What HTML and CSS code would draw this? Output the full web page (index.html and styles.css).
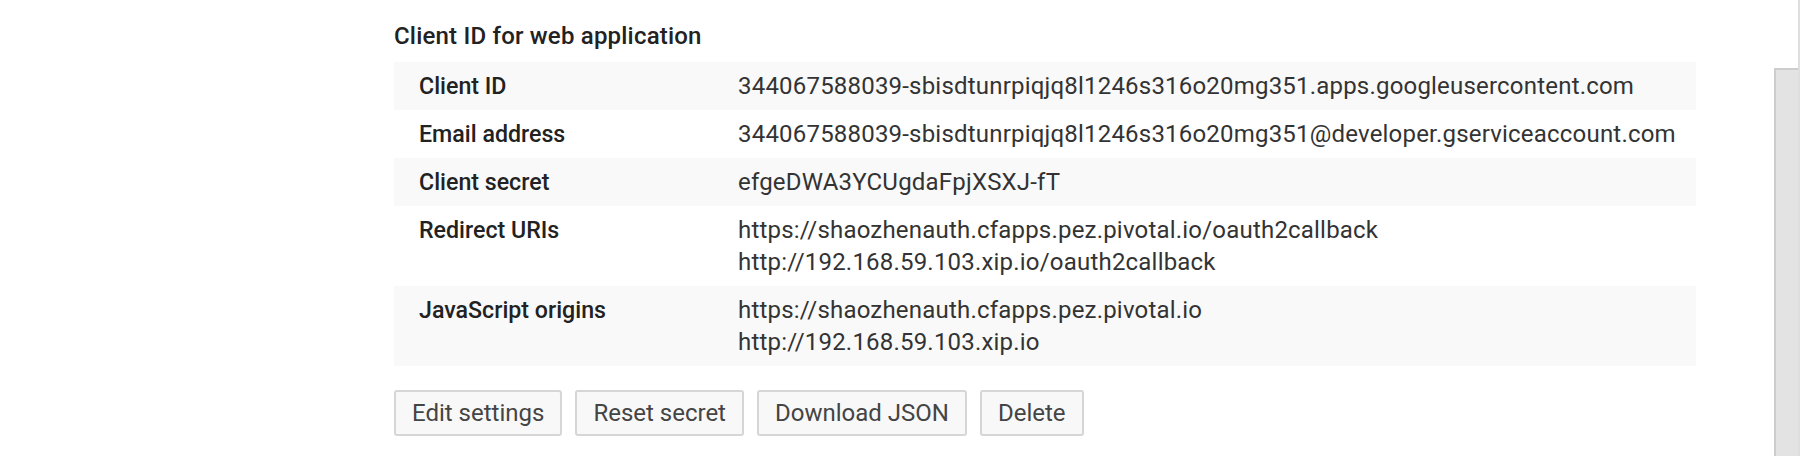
FILE: index.html
```html
<!DOCTYPE html>
<html>
<head>
<meta charset="utf-8">
<link rel="stylesheet" href="styles.css">
</head>
<body>
<div class="page">
  <main class="content">
    <h2 class="title">Client ID for web application</h2>
    <div class="table">
      <div class="row shaded">
        <div class="label">Client ID</div>
        <div class="value">344067588039-sbisdtunrpiqjq8l1246s316o20mg351.apps.googleusercontent.com</div>
      </div>
      <div class="row">
        <div class="label">Email address</div>
        <div class="value">344067588039-sbisdtunrpiqjq8l1246s316o20mg351@developer.gserviceaccount.com</div>
      </div>
      <div class="row shaded">
        <div class="label">Client secret</div>
        <div class="value">efgeDWA3YCUgdaFpjXSXJ-fT</div>
      </div>
      <div class="row">
        <div class="label">Redirect URIs</div>
        <div class="value">
          <div>https://shaozhenauth.cfapps.pez.pivotal.io/oauth2callback</div>
          <div>http://192.168.59.103.xip.io/oauth2callback</div>
        </div>
      </div>
      <div class="row shaded">
        <div class="label">JavaScript origins</div>
        <div class="value">
          <div>https://shaozhenauth.cfapps.pez.pivotal.io</div>
          <div>http://192.168.59.103.xip.io</div>
        </div>
      </div>
    </div>
    <div class="actions">
      <button class="btn">Edit settings</button>
      <button class="btn">Reset secret</button>
      <button class="btn">Download JSON</button>
      <button class="btn">Delete</button>
    </div>
  </main>
  <aside class="rail">
    <div class="thumb"></div>
  </aside>
</div>
</body>
</html>
```

FILE: styles.css
```css
html, body {
  margin: 0;
  padding: 0;
  background: #ffffff;
}

body {
  font-family: Roboto, "Noto Sans", Arial, sans-serif;
  color: #333333;
  width: 1800px;
  height: 456px;
  overflow: hidden;
}

.page {
  display: flex;
  height: 456px;
}

.content {
  flex: 0 0 1302px;
  margin-left: 394px;
  padding-top: 18px;
}

.title {
  margin: 0 0 8px 0;
  font-size: 24px;
  line-height: 36px;
  font-weight: 500;
  letter-spacing: 0.2px;
  color: #222222;
}

.table {
  display: flex;
  flex-direction: column;
}

.row {
  display: flex;
  padding: 8px 0;
  font-size: 24px;
  line-height: 32px;
}

.row.shaded {
  background: #f9f9f9;
}

.label {
  flex: 0 0 319px;
  padding-left: 25px;
  font-size: 23.2px;
  font-weight: 500;
  color: #222222;
}

.value {
  flex: 1;
  color: #333333;
  letter-spacing: 0.2px;
  white-space: nowrap;
}

.actions {
  display: flex;
  gap: 13px;
  margin-top: 24px;
}

.btn {
  box-sizing: border-box;
  height: 46px;
  padding: 0 16px;
  font-family: inherit;
  font-size: 24px;
  color: #444444;
  background: #f8f8f8;
  border: 2px solid #d6d6d6;
  border-radius: 3px;
}

.rail {
  margin-left: auto;
  width: 26px;
  display: flex;
  flex-direction: column;
  border-right: 2px solid #dedede;
  box-sizing: border-box;
}

.thumb {
  margin-top: 68px;
  flex: 1;
  background: #e3e3e3;
  border-top: 2px solid #cdcdcd;
  border-left: 2px solid #cdcdcd;
}
```
